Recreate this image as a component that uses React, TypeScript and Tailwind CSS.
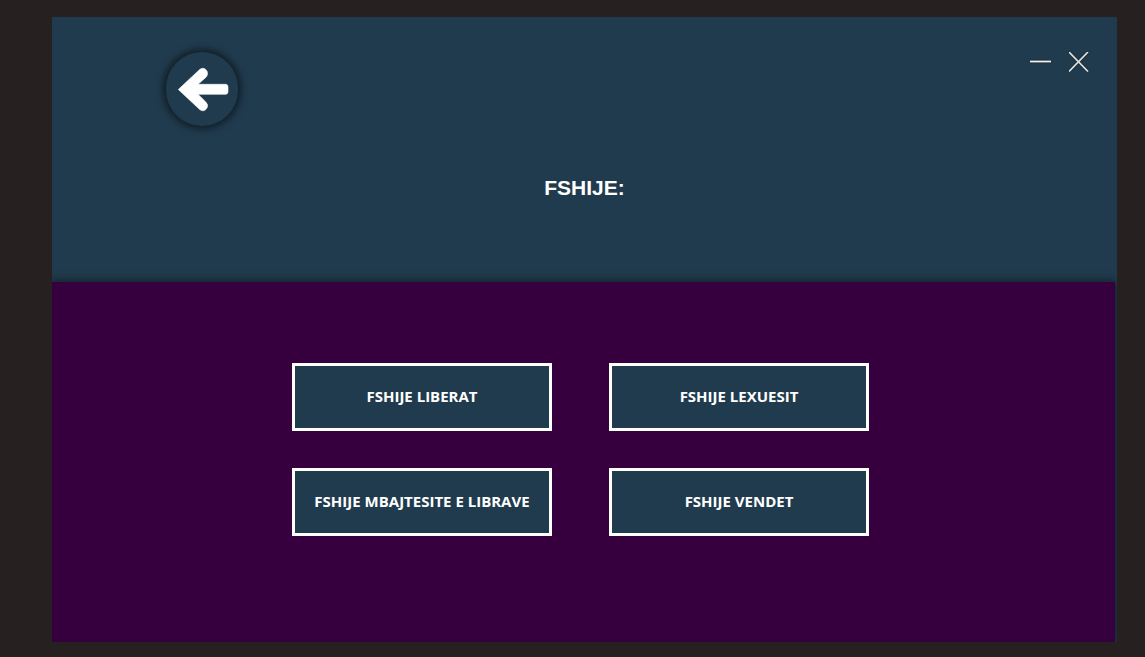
const actions = [
  "FSHIJE LIBERAT",
  "FSHIJE LEXUESIT",
  "FSHIJE MBAJTESITE E LIBRAVE",
  "FSHIJE VENDET",
];

function BackIcon() {
  return (
    <svg viewBox="0 0 72 74" className="block h-full w-full" aria-hidden="true">
      <path
        d="M12.3 37.5 34 17.2Q38.5 14.6 41.2 19.4Q42.4 22.8 39.8 25.4L32 32.3H60Q62 32.6 62 35V39.6Q62 42 60 42.3H32L39.8 50Q42.4 52.6 41.2 55.6Q38.5 60.6 34 57.8Z"
        fill="#fff"
        stroke="#fff"
        strokeWidth="0.6"
        strokeLinejoin="round"
      />
    </svg>
  );
}

export default function App() {
  return (
    <div className="flex min-h-screen flex-col bg-[#262120] pt-[17px] pr-7 pb-[15px] pl-[52px]">
      <div className="flex grow flex-col bg-[#213b4e]">
        <header className="h-[265px]">
          <div className="flex items-start justify-between pt-[35px] pr-7 pl-[114px]">
            <button
              type="button"
              aria-label="Kthehu"
              className="h-[74px] w-[72px] rounded-full bg-[#213b4e] shadow-[0_0_7px_3px_rgba(10,20,26,0.75)]"
            >
              <BackIcon />
            </button>
            <div className="flex gap-[18px]">
              <button type="button" aria-label="Minimizo">
                <svg width="21" height="20" viewBox="0 0 21 20" aria-hidden="true">
                  <path d="M0 9.5H21" stroke="#1a303f" strokeWidth="4" />
                  <path d="M0 9.5H21" stroke="#f1efeb" strokeWidth="1.8" />
                </svg>
              </button>
              <button type="button" aria-label="Mbyll">
                <svg width="20" height="20" viewBox="0 0 20 20" aria-hidden="true">
                  <path d="M0 0 19 19.5M19 0 0 19.5" stroke="#1a303f" strokeWidth="3.4" />
                  <path d="M0 0 19 19.5M19 0 0 19.5" stroke="#e1dfda" strokeWidth="1.7" />
                </svg>
              </button>
            </div>
          </div>
          <h1 className="pt-[46px] text-center font-['Liberation_Sans',sans-serif] text-[21px] leading-8 font-bold text-white">
            FSHIJE:
          </h1>
        </header>
        <main className="mr-0.5 flex grow justify-center bg-[#36003f] pt-[81px] pr-1.5 shadow-[0_0_8px_1px_rgba(10,20,26,0.75)] [clip-path:inset(-12px_-2px_0_0)]">
          <div className="grid auto-rows-[68px] grid-cols-[260px_260px] gap-x-[57px] gap-y-[37px]">
            {actions.map((label) => (
              <button
                key={label}
                type="button"
                className="border-[3px] border-white bg-[#213b4e] pb-0.5 font-['Open_Sans','Noto_Sans',sans-serif] text-[15px] leading-5 font-bold whitespace-nowrap text-white"
              >
                {label}
              </button>
            ))}
          </div>
        </main>
      </div>
    </div>
  );
}
